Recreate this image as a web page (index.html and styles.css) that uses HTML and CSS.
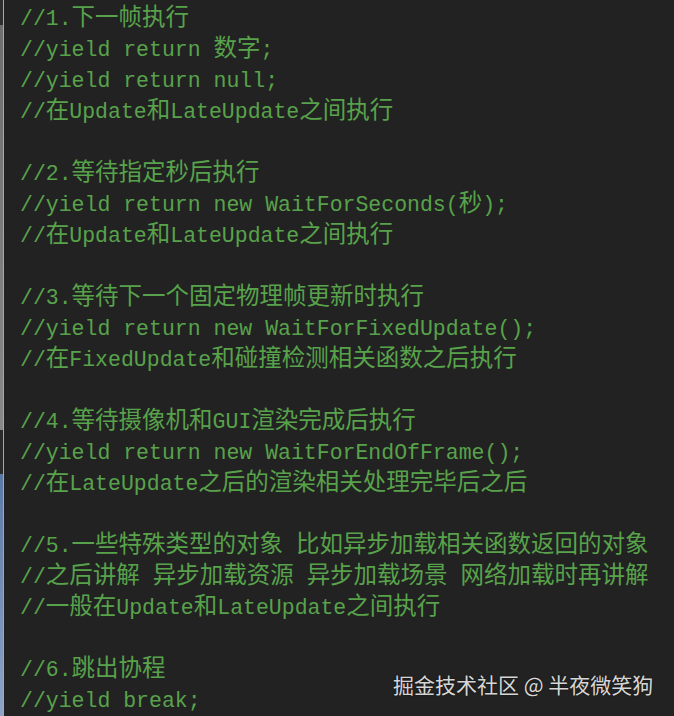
FILE: index.html
```html
<!DOCTYPE html>
<html lang="zh">
<head>
<meta charset="utf-8">
<link rel="stylesheet" href="styles.css">
</head>
<body>
<div class="frame">
  <div class="strip">
    <div class="seg seg-top"></div>
    <div class="seg seg-grey"></div>
    <div class="seg seg-dark"></div>
    <div class="seg seg-blue"></div>
  </div>
  <div class="editor">
    <div class="line">//1.<span class="zh">下一帧执行</span></div>
    <div class="line">//yield return <span class="zh">数字</span>;</div>
    <div class="line">//yield return null;</div>
    <div class="line">//<span class="zh">在</span>Update<span class="zh">和</span>LateUpdate<span class="zh">之间执行</span></div>
    <div class="line"></div>
    <div class="line">//2.<span class="zh">等待指定秒后执行</span></div>
    <div class="line">//yield return new WaitForSeconds(<span class="zh">秒</span>);</div>
    <div class="line">//<span class="zh">在</span>Update<span class="zh">和</span>LateUpdate<span class="zh">之间执行</span></div>
    <div class="line"></div>
    <div class="line">//3.<span class="zh">等待下一个固定物理帧更新时执行</span></div>
    <div class="line">//yield return new WaitForFixedUpdate();</div>
    <div class="line">//<span class="zh">在</span>FixedUpdate<span class="zh">和碰撞检测相关函数之后执行</span></div>
    <div class="line"></div>
    <div class="line">//4.<span class="zh">等待摄像机和</span>GUI<span class="zh">渲染完成后执行</span></div>
    <div class="line">//yield return new WaitForEndOfFrame();</div>
    <div class="line">//<span class="zh">在</span>LateUpdate<span class="zh">之后的渲染相关处理完毕后之后</span></div>
    <div class="line"></div>
    <div class="line">//5.<span class="zh">一些特殊类型的对象</span> <span class="zh">比如异步加载相关函数返回的对象</span></div>
    <div class="line">//<span class="zh">之后讲解</span> <span class="zh">异步加载资源</span> <span class="zh">异步加载场景</span> <span class="zh">网络加载时再讲解</span></div>
    <div class="line">//<span class="zh">一般在</span>Update<span class="zh">和</span>LateUpdate<span class="zh">之间执行</span></div>
    <div class="line"></div>
    <div class="line">//6.<span class="zh">跳出协程</span></div>
    <div class="line">//yield break;</div>
  </div>
  <div class="watermark">掘金技术社区 @ 半夜微笑狗</div>
</div>
</body>
</html>
```
FILE: styles.css
```css
html, body {
  margin: 0;
  padding: 0;
  background: #222222;
}

.frame {
  position: relative;
  width: 674px;
  height: 716px;
  display: flex;
  overflow: hidden;
  background: #222222;
}

.strip {
  width: 3px;
  flex: none;
  display: flex;
  flex-direction: column;
  border-right: 1px solid #a8a8a8;
}

.seg-top { height: 25px; background: #2e2e2e; }
.seg-grey { height: 405px; background: linear-gradient(#6e6e6e, #8a8886); }
.seg-dark { height: 44px; background: #2b2b2b; }
.seg-blue { flex: 1; background: linear-gradient(#5c79a6, #8ea3c6); }

.editor {
  flex: 1;
  padding: 4px 0 0 16px;
  font-family: "Liberation Mono", "DejaVu Sans Mono", "Noto Sans CJK SC", monospace;
  font-size: 21.5px;
  color: #58a24b;
}

.line {
  height: 31px;
  line-height: 31px;
  white-space: pre;
}

.zh {
  font-family: "Noto Sans CJK SC", sans-serif;
  font-size: 23.5px;
  line-height: 1;
}

.watermark {
  position: absolute;
  left: 393px;
  top: 669px;
  font-family: "Noto Sans CJK SC", sans-serif;
  font-size: 21px;
  line-height: 30px;
  color: #d6d6d6;
  white-space: nowrap;
  text-shadow: 0 0 2px rgba(0, 0, 0, 0.6);
}
```
